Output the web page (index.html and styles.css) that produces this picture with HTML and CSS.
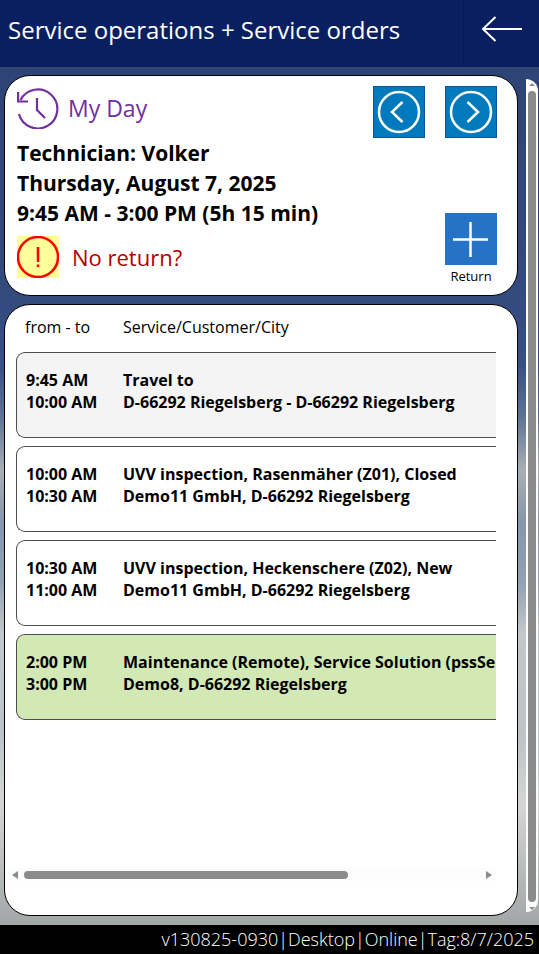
FILE: index.html
```html
<!DOCTYPE html>
<html lang="en">
<head>
<meta charset="utf-8">
<meta name="viewport" content="width=device-width, initial-scale=1">
<title>Service operations + Service orders</title>
<link rel="stylesheet" href="styles.css">
</head>
<body>
<header class="topbar">
  <h1 class="title">Service operations + Service orders</h1>
  <button class="back" type="button" aria-label="Back">
    <svg width="42" height="28" viewBox="0 0 42 28" fill="none" stroke="#fff" stroke-width="2"><path d="M41 14H2M14.500 2L2 14l12.500 12"/></svg>
  </button>
</header>
<div class="content">
  <main class="cards">
    <section class="card day">
      <div class="dayhead">
        <svg width="42" height="42" viewBox="0 0 42 42" fill="none" stroke="#7030a0" stroke-width="2.200"><path d="M3.500 13A19.500 19.500 0 1 1 2 27M1.100 5v9.500h10M20 11v12l8 8"/></svg>
        <h2 class="daytitle">My Day</h2>
        <div class="pager">
          <button class="nav" type="button" aria-label="Previous day">
            <svg width="44" height="44" viewBox="0 0 44 44" fill="none" stroke="#fff"><circle cx="22" cy="22" r="20" stroke-width="2.500"/><path stroke-width="2.500" d="M25.500 12L15 22l10.500 10"/></svg>
          </button>
          <button class="nav" type="button" aria-label="Next day">
            <svg width="44" height="44" viewBox="0 0 44 44" fill="none" stroke="#fff"><circle cx="22" cy="22" r="20" stroke-width="2.500"/><path stroke-width="2.500" d="M18.500 12L29 22 18.500 32"/></svg>
          </button>
        </div>
      </div>
      <div class="daybody">
        <div class="info">
          <p>Technician: Volker</p>
          <p>Thursday, August 7, 2025</p>
          <p>9:45 AM - 3:00 PM (5h 15 min)</p>
          <div class="warning">
            <svg class="warnicon" width="42" height="42" viewBox="0 0 42 42" fill="none" stroke="#f00"><circle cx="21" cy="21" r="20" stroke-width="2.500"/><path stroke-width="2.500" d="M21 11v15M21 28.500v2.500"/></svg>
            <span>No return?</span>
          </div>
        </div>
        <button class="return" type="button">
          <svg width="52" height="52" viewBox="0 0 52 52"><path fill="#2672c4" d="M0 0h52v52H0z"/><path stroke="#fff" stroke-width="2.500" d="M8 26.500h35M25.500 9v35"/></svg>
          <span>Return</span>
        </button>
      </div>
    </section>
    <section class="card orders">
      <div class="viewport">
        <table class="list">
          <thead>
            <tr><th class="time" scope="col">from - to</th><th scope="col">Service/Customer/City</th></tr>
          </thead>
          <tbody>
            <tr class="travel"><td>9:45 AM<br>10:00 AM</td><td>Travel to<br>D-66292 Riegelsberg - D-66292 Riegelsberg</td></tr>
            <tr><td>10:00 AM<br>10:30 AM</td><td>UVV inspection, Rasenmäher (Z01), Closed<br>Demo11 GmbH, D-66292 Riegelsberg</td></tr>
            <tr><td>10:30 AM<br>11:00 AM</td><td>UVV inspection, Heckenschere (Z02), New<br>Demo11 GmbH, D-66292 Riegelsberg</td></tr>
            <tr class="remote"><td>2:00 PM<br>3:00 PM</td><td>Maintenance (Remote), Service Solution (pssSe<br>Demo8, D-66292 Riegelsberg</td></tr>
          </tbody>
        </table>
      </div>
      <div class="hscroll" aria-hidden="true">
        <svg width="6" height="8" viewBox="0 0 6 8"><path fill="#8b8b8b" d="M6 0v8L0 4z"/></svg>
        <div class="htrack"><div class="hthumb"></div></div>
        <svg width="6" height="8" viewBox="0 0 6 8"><path fill="#8b8b8b" d="M0 0v8l6-4z"/></svg>
      </div>
    </section>
  </main>
  <div class="vscroll" aria-hidden="true">
    <svg width="6" height="3" viewBox="0 0 6 3"><path fill="#8b8b8b" d="M0 3l3-3 3 3z"/></svg>
    <div class="vthumb"></div>
    <svg width="6" height="3" viewBox="0 0 6 3"><path fill="#8b8b8b" d="M0 0l3 3 3-3z"/></svg>
  </div>
</div>
<footer class="status">v130825-0930|Desktop|Online|Tag:8/7/2025</footer>
</body>
</html>
```
FILE: styles.css
```css
* { box-sizing: border-box; }

body {
  margin: 0;
  min-height: 100vh;
  display: flex;
  flex-direction: column;
  font-family: "Open Sans", sans-serif;
  color: #000;
}

h1, h2, p { margin: 0; }

button {
  margin: 0;
  padding: 0;
  border: 0;
  background: none;
  font: inherit;
  color: inherit;
  cursor: pointer;
}

svg { display: block; flex: none; }

.topbar {
  display: flex;
  height: 67px;
  background: #091f60;
  color: #fff;
}

.title {
  flex: 1;
  padding-left: 8px;
  font-size: 24px;
  line-height: 60px;
  font-weight: 400;
  white-space: nowrap;
}

.back {
  display: flex;
  justify-content: center;
  width: 76px;
  padding-top: 15px;
  border-left: 1px solid #061a58;
}

.content {
  flex: 1;
  display: flex;
  gap: 8px;
  padding: 8px 1px 9px 4px;
  background: linear-gradient(#2f4476 0, #344b80 28%, #365186 35%, #5f7596 41%, #a9afb4 47%, #8796ab 53%, #92a0b3 60%, #c3c7c9 66%, #bfc3c6 78%, #d4d6d5 86%, #a2a6a6 100%);
}

.cards {
  flex: 1;
  min-width: 0;
  display: flex;
  flex-direction: column;
  gap: 8px;
}

.card {
  background: #fff;
  border: 1px solid #000;
  border-radius: 26px;
}

.day {
  height: 221px;
  padding: 10px 20px 0 12px;
}

.dayhead { display: flex; align-items: flex-start; }

.dayhead > svg { margin-top: 1px; }

.daytitle {
  flex: 1;
  padding-left: 9px;
  font-size: 23px;
  line-height: 44px;
  font-weight: 500;
  color: #7030a0;
}

.pager { display: flex; gap: 20px; }

.nav {
  display: flex;
  align-items: center;
  justify-content: center;
  width: 52px;
  height: 52px;
  background: #007abc;
  border: 1px solid #13549a;
}

.daybody { display: flex; justify-content: space-between; }

.info {
  font-size: 21px;
  line-height: 30px;
  font-weight: 700;
}

.warning {
  display: flex;
  align-items: center;
  gap: 13px;
  margin-top: 8px;
  font-size: 22px;
  font-weight: 500;
  color: #b00000;
}

.warnicon { background: #ffff99; }

.return {
  align-self: flex-start;
  margin-top: 75px;
  font-size: 13px;
  line-height: 22px;
}

.orders {
  flex: 1;
  display: flex;
  flex-direction: column;
  padding: 0 21px 34px 11px;
}

.viewport { flex: 1; overflow: hidden; }

.list {
  width: 120%;
  table-layout: fixed;
  border-collapse: separate;
  border-spacing: 0 8px;
  font-size: 16px;
  line-height: 22px;
  text-align: left;
  white-space: nowrap;
}

th {
  height: 31px;
  padding: 0 0 4px 9px;
  font-weight: 400;
}

.time { width: 98px; }

td {
  height: 86px;
  padding: 16px 0 0 9px;
  border: solid #4d4d4d;
  border-width: 1px 0;
  vertical-align: top;
  font-weight: 700;
}

td:first-child {
  border-left-width: 1px;
  border-radius: 9px 0 0 9px;
}

.travel td { background: #f4f4f4; }
.remote td { background: #d2e8b5; }

.hscroll {
  display: flex;
  align-items: center;
  gap: 6px;
  height: 13px;
  margin: 0 0 0 -8px;
  padding: 0 4px;
  background: #fcfcfc;
}

.htrack { flex: 1; }

.hthumb {
  width: 71%;
  height: 8px;
  border-radius: 4px;
  background: #8b8b8b;
}

.vscroll {
  display: flex;
  flex-direction: column;
  align-items: center;
  gap: 5px;
  width: 12px;
  margin: 4px 0;
  padding: 4px 0 2px;
  background: #fcfcfc;
  border-radius: 0 12px 12px 0;
}

.vthumb {
  flex: 1;
  width: 8px;
  border-radius: 4px;
  background: #8b8b8b;
}

.status {
  height: 29px;
  padding-right: 5px;
  background: #000;
  color: #fff;
  font-size: 18px;
  line-height: 28px;
  font-weight: 300;
  text-align: right;
}
```
